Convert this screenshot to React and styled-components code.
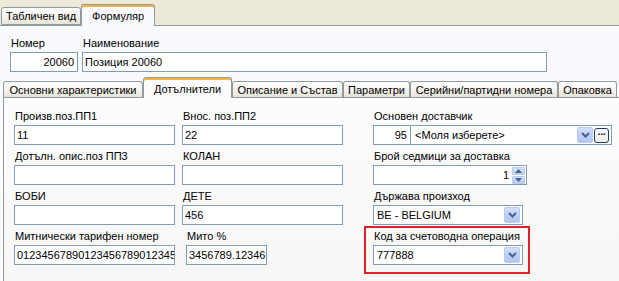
import styled, { createGlobalStyle } from 'styled-components';

const GlobalStyle = createGlobalStyle`
  body {
    margin: 0;
    overflow: hidden;
    background: #f9fafd;
    font-family: "Liberation Sans", Tahoma, Arial, sans-serif;
    font-size: 11px;
    color: #000;
  }
`;

function Chevron() {
  return (
    <svg width="9" height="6" viewBox="0 0 9 6">
      <path d="M1 1 L4.5 4.5 L8 1" fill="none" stroke="#4d6185" strokeWidth="2" />
    </svg>
  );
}

function Arrow({ up }) {
  return (
    <svg width="7" height="4" viewBox="0 0 7 4">
      <path d={up ? 'M0 4 L3.5 0 L7 4 Z' : 'M0 0 L3.5 4 L7 0 Z'} fill="#4d6185" />
    </svg>
  );
}

function Field({ label, children, indent }) {
  return (
    <FieldBox $indent={indent}>
      <Label>{label}</Label>
      {children}
    </FieldBox>
  );
}

function Combo({ value, width }) {
  return (
    <ComboBox $w={width}>
      <ComboText>{value}</ComboText>
      <DropButton>
        <Chevron />
      </DropButton>
    </ComboBox>
  );
}

function App() {
  return (
    <>
      <GlobalStyle />
      <TopBar>
        <TopTab>Табличен вид</TopTab>
        <TopTab $active>Формуляр</TopTab>
      </TopBar>

      <HeaderRow>
        <Field label="Номер">
          <TextBox $w={68} $right>20060</TextBox>
        </Field>
        <Field label="Наименование">
          <TextBox $w={465}>Позиция 20060</TextBox>
        </Field>
      </HeaderRow>

      <SubTabs>
        <SubTab $w={140}>Основни характеристики</SubTab>
        <SubTab $w={89} $active>Дотълнители</SubTab>
        <SubTab $w={111}>Описание и Състав</SubTab>
        <SubTab $w={67}>Параметри</SubTab>
        <SubTab $w={148}>Серийни/партидни номера</SubTab>
        <SubTab $w={59}>Опаковка</SubTab>
      </SubTabs>

      <Panel>
        <Column $w={161}>
          <Field label="Произв.поз.ПП1">
            <TextBox>11</TextBox>
          </Field>
          <Field label="Дотълн. опис.поз ПП3">
            <TextBox />
          </Field>
          <Field label="БОБИ">
            <TextBox />
          </Field>
          <Field label="Митнически тарифен номер">
            <TextBox $clip>012345678901234567890123456789</TextBox>
          </Field>
        </Column>

        <Column $w={161}>
          <Field label="Внос. поз.ПП2">
            <TextBox>22</TextBox>
          </Field>
          <Field label="КОЛАН">
            <TextBox />
          </Field>
          <Field label="ДЕТЕ">
            <TextBox>456</TextBox>
          </Field>
          <Field label="Мито %" indent={4}>
            <TextBox $w={81}>3456789.12346</TextBox>
          </Field>
        </Column>

        <Column $w={240} $gapLeft={30}>
          <Field label="Основен доставчик">
            <SupplierBox>
              <CodeCell>95</CodeCell>
              <ComboText>&lt;Моля изберете&gt;</ComboText>
              <DropButton>
                <Chevron />
              </DropButton>
              <DotsButton>···</DotsButton>
            </SupplierBox>
          </Field>
          <Field label="Брой седмици за доставка">
            <SpinBox>
              <ComboText $right>1</ComboText>
              <SpinButtons>
                <SpinHalf>
                  <Arrow up />
                </SpinHalf>
                <SpinHalf>
                  <Arrow />
                </SpinHalf>
              </SpinButtons>
            </SpinBox>
          </Field>
          <Field label="Държава произход">
            <Combo value="BE - BELGIUM" width={150} />
          </Field>
          <Highlight>
            <Field label="Код за счетоводна операция">
              <Combo value="777888" width={150} />
            </Field>
          </Highlight>
        </Column>
      </Panel>
    </>
  );
}

const TopBar = styled.div`
  height: 25px;
  background: #ece9d8;
  border-bottom: 1px solid #919b9c;
  display: flex;
  align-items: flex-end;
  padding-left: 1px;
`;

const TopTab = styled.div`
  box-sizing: border-box;
  height: ${(p) => (p.$active ? '22px' : '18px')};
  margin-bottom: ${(p) => (p.$active ? '-1px' : '0')};
  padding: 0 ${(p) => (p.$active ? '10px' : '4px')};
  display: flex;
  align-items: center;
  justify-content: center;
  border: 1px solid #919b9c;
  border-bottom: ${(p) => (p.$active ? 'none' : '1px solid #919b9c')};
  border-radius: 3px 3px 0 0;
  background: ${(p) =>
    p.$active ? '#f9fafd' : 'linear-gradient(#ffffff, #f3f2ec 60%, #e6e4d8)'};
  box-shadow: ${(p) => (p.$active ? 'inset 0 2px 0 #f5b440' : 'none')};
  white-space: nowrap;
`;

const HeaderRow = styled.div`
  display: flex;
  gap: 4px;
  padding: 10px 10px 0;
`;

const FieldBox = styled.div`
  display: flex;
  flex-direction: column;
  gap: 2px;
  margin-left: ${(p) => p.$indent || 0}px;
  width: fit-content;
`;

const Label = styled.div`
  height: 14px;
  line-height: 14px;
  padding-left: 1px;
  white-space: nowrap;
`;

const TextBox = styled.div`
  box-sizing: border-box;
  width: ${(p) => (p.$w ? `${p.$w}px` : '161px')};
  height: 20px;
  line-height: 18px;
  border: 1px solid #7f9db9;
  background: #fff;
  padding: 0 3px 0 2px;
  text-align: ${(p) => (p.$right ? 'right' : 'left')};
  white-space: nowrap;
  overflow: hidden;
`;

const SubTabs = styled.div`
  display: flex;
  align-items: flex-end;
  height: 20px;
  margin-top: 5px;
  padding-left: 3px;
`;

const SubTab = styled.div`
  box-sizing: border-box;
  width: ${(p) => p.$w}px;
  height: ${(p) => (p.$active ? '21px' : '16px')};
  margin-bottom: ${(p) => (p.$active ? '-1px' : '0')};
  display: flex;
  align-items: center;
  justify-content: center;
  border: 1px solid #919b9c;
  border-bottom: none;
  border-radius: 3px 3px 0 0;
  background: ${(p) =>
    p.$active ? '#fcfcfe' : 'linear-gradient(#ffffff, #f3f2ec 60%, #e6e4d8)'};
  box-shadow: ${(p) => (p.$active ? 'inset 0 2px 0 #f5b440' : 'none')};
  padding-top: ${(p) => (p.$active ? '1px' : '0')};
  white-space: nowrap;
`;

const Panel = styled.div`
  display: flex;
  margin-left: 3px;
  width: 700px;
  height: 200px;
  border: 1px solid #919b9c;
  background: linear-gradient(#fcfcfe, #f6f6f4);
  padding: 11px 0 0 10px;
`;

const Column = styled.div`
  display: flex;
  flex-direction: column;
  gap: 4px;
  width: ${(p) => p.$w}px;
  margin-left: ${(p) => (p.$gapLeft !== undefined ? p.$gapLeft : 7)}px;

  &:first-child {
    margin-left: 0;
  }
`;

const ComboBox = styled.div`
  box-sizing: border-box;
  width: ${(p) => p.$w}px;
  height: 20px;
  border: 1px solid #7f9db9;
  background: #fff;
  display: flex;
  align-items: center;
  padding-right: 2px;
`;

const SupplierBox = styled(ComboBox)`
  width: 239px;
  gap: 1px;
`;

const SpinBox = styled(ComboBox)`
  width: 154px;
  padding-right: 1px;
`;

const CodeCell = styled.div`
  width: 37px;
  height: 100%;
  line-height: 18px;
  border-right: 1px solid #7f9db9;
  text-align: right;
  padding-right: 3px;
  box-sizing: border-box;
`;

const ComboText = styled.div`
  flex: 1;
  padding: 0 3px;
  text-align: ${(p) => (p.$right ? 'right' : 'left')};
  white-space: nowrap;
  overflow: hidden;
`;

const DropButton = styled.div`
  box-sizing: border-box;
  width: 16px;
  height: 16px;
  border: 1px solid #bccbf0;
  border-radius: 2px;
  background: linear-gradient(#d5e0fb, #bccdf8 55%, #b3c6f6);
  display: flex;
  align-items: center;
  justify-content: center;
`;

const DotsButton = styled.div`
  box-sizing: border-box;
  width: 15px;
  height: 15px;
  border: 1px solid #1c3c6c;
  border-radius: 3px;
  background: linear-gradient(#ffffff, #ecebe6);
  display: flex;
  align-items: center;
  justify-content: center;
  font-size: 11px;
  line-height: 1;
  letter-spacing: -1px;
  color: #1c2c44;
  font-weight: bold;
  padding-bottom: 1px;
`;

const SpinButtons = styled.div`
  display: flex;
  flex-direction: column;
  gap: 1px;
`;

const SpinHalf = styled.div`
  box-sizing: border-box;
  width: 13px;
  height: 8px;
  border: 1px solid #bccbf0;
  border-radius: 1px;
  background: linear-gradient(#d5e0fb, #b8cbf7);
  display: flex;
  align-items: center;
  justify-content: center;
`;

const Highlight = styled.div`
  width: fit-content;
  margin: -3px 0 0 -9px;
  padding: 1px 5px 7px 7px;
  border: 2px solid #e21f26;
`;

export default App;
